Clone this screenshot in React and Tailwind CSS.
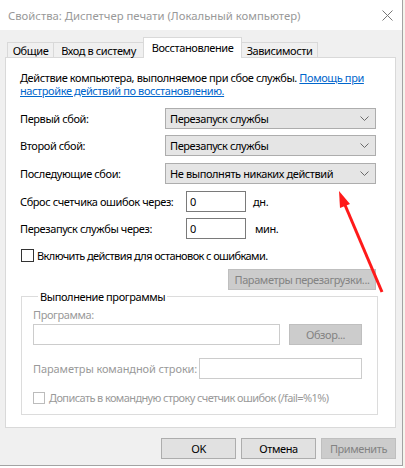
import React from 'react';

function Chevron() {
  return (
    <svg width="9" height="5" viewBox="0 0 9 5" className="shrink-0">
      <path d="M0.5 0.5 L4.5 4.5 L8.5 0.5" fill="none" stroke="#6a6a6a" strokeWidth="1" />
    </svg>
  );
}

function Combo({ value }) {
  return (
    <div className="w-[211px] h-[21px] bg-[#e5e5e5] border border-[#adadad] flex items-center pl-[4px] pr-[6px]">
      <span className="flex-1">{value}</span>
      <Chevron />
    </div>
  );
}

function Tab({ label, active, width }) {
  if (active) {
    return (
      <div
        className={`${width} h-[21px] -mb-px -ml-px relative z-10 bg-white border border-b-0 border-[#d9d9d9] flex justify-center pt-[3px]`}
      >
        {label}
      </div>
    );
  }
  return (
    <div className={`${width} h-[15px] -ml-px bg-[#f0f0f0] border border-b-0 border-[#d9d9d9] flex justify-center items-center`}>
      {label}
    </div>
  );
}

export default function App() {
  return (
    <div className="w-[405px] h-[468px] bg-white flex overflow-hidden relative font-['Noto_Sans',sans-serif] text-[11px] leading-[13px] tracking-[-0.4px] text-black whitespace-nowrap">
      <div className="w-[403px] h-[466px] flex flex-col border-r border-b border-[#a3a3a3] bg-[#f0f0f0] shrink-0">
        {/* title bar */}
        <div className="h-[30px] bg-white flex items-center pl-[8px] pr-[9px] text-[#999999] text-[11.3px] tracking-normal shrink-0">
          <span className="flex-1">Свойства: Диспетчер печати (Локальный компьютер)</span>
          <svg width="11" height="11" viewBox="0 0 11 11">
            <path d="M0.5 0.5 L10.5 10.5 M10.5 0.5 L0.5 10.5" stroke="#777" strokeWidth="1" />
          </svg>
        </div>

        <div className="pl-[5px] pt-[7px]">
          {/* tabs */}
          <div className="flex items-end h-[20px] pl-[3px]">
            <Tab label="Общие" width="w-[47px]" />
            <Tab label="Вход в систему" width="w-[91px]" />
            <Tab label="Восстановление" width="w-[99px]" active />
            <Tab label="Зависимости" width="w-[77px]" />
          </div>

          {/* panel */}
          <div className="w-[391px] h-[371px] bg-white border border-[#d9d9d9] pl-[14px] pt-[13px]">
            <div>
              Действие компьютера, выполняемое при сбое службы.{' '}
              <span className="text-[#0066cc] underline">Помощь при</span>
            </div>
            <div className="text-[#0066cc] underline">настройке действий по восстановлению.</div>

            <div className="flex items-center mt-[11px]">
              <span className="w-[145px]">Первый сбой:</span>
              <Combo value="Перезапуск службы" />
            </div>
            <div className="flex items-center mt-[6px]">
              <span className="w-[145px]">Второй сбой:</span>
              <Combo value="Перезапуск службы" />
            </div>
            <div className="flex items-center mt-[7px]">
              <span className="w-[145px]">Последующие сбои:</span>
              <Combo value="Не выполнять никаких действий" />
            </div>

            <div className="flex items-center mt-[7px]">
              <span className="w-[166px]">Сброс счетчика ошибок через:</span>
              <div className="w-[60px] h-[21px] border border-[#7a7a7a] flex items-center pl-[3px]">0</div>
              <span className="ml-[7px]">дн.</span>
            </div>
            <div className="flex items-center mt-[6px]">
              <span className="w-[166px]">Перезапуск службы через:</span>
              <div className="w-[60px] h-[21px] border border-[#7a7a7a] flex items-center pl-[3px]">0</div>
              <span className="ml-[9px]">мин.</span>
            </div>

            <div className="flex items-center mt-[10px] h-[13px]">
              <div className="ml-[1px] w-[13px] h-[13px] border border-[#333333] bg-white" />
              <span className="ml-[3px] tracking-[-0.6px]">Включить действия для остановок с ошибками.</span>
            </div>

            <div className="ml-[208px] mt-[7px] w-[148px] h-[21px] bg-[#cccccc] border border-[#bfbfbf] text-[#838383] flex items-center justify-center">
              Параметры перезагрузки...
            </div>

            <fieldset className="ml-[1px] w-[357px] border border-[#dcdcdc] pl-[11px] pb-[10px]">
              <legend className="ml-[5px] px-[2px]">Выполнение программы</legend>
              <div className="text-[#9a9a9a] mt-[5px]">Программа:</div>
              <div className="flex items-center mt-[3px]">
                <div className="w-[247px] h-[21px] border border-[#cccccc] bg-white" />
                <div className="ml-[9px] w-[73px] h-[21px] bg-[#cccccc] border border-[#bfbfbf] text-[#838383] flex items-center justify-center">
                  Обзор...
                </div>
              </div>
              <div className="flex items-center mt-[13px]">
                <span className="w-[166px] text-[#9a9a9a] tracking-[-0.1px]">Параметры командной строки:</span>
                <div className="w-[163px] h-[21px] border border-[#cccccc] bg-white" />
              </div>
              <div className="flex items-center mt-[12px] h-[13px]">
                <div className="w-[12px] h-[12px] border border-[#bcbcbc] bg-white" />
                <span className="ml-[4px] text-[#9a9a9a] tracking-[-0.6px]">
                  Дописать в командную строку счетчик ошибок (/fail=%1%)
                </span>
              </div>
            </fieldset>
          </div>
        </div>

        {/* dialog buttons */}
        <div className="flex justify-end gap-[5px] pr-[6px] mt-[10px]">
          <div className="w-[75px] h-[21px] bg-[#e1e1e1] border border-[#adadad] flex items-center justify-center">OK</div>
          <div className="w-[75px] h-[21px] bg-[#e1e1e1] border border-[#adadad] flex items-center justify-center">Отмена</div>
          <div className="w-[75px] h-[21px] bg-[#cccccc] border border-[#bfbfbf] text-[#838383] flex items-center justify-center">
            Применить
          </div>
        </div>
      </div>
      <div className="w-[2px] h-full bg-[#f4f4ec]" />

      {/* red annotation arrow */}
      <svg className="absolute left-0 top-0 pointer-events-none" width="405" height="468" viewBox="0 0 405 468">
        <line x1="345" y1="205" x2="382" y2="292" stroke="#ff1a1a" strokeWidth="3" />
        <polygon points="339,191 350,204 340,208" fill="#ff1a1a" />
      </svg>
    </div>
  );
}
